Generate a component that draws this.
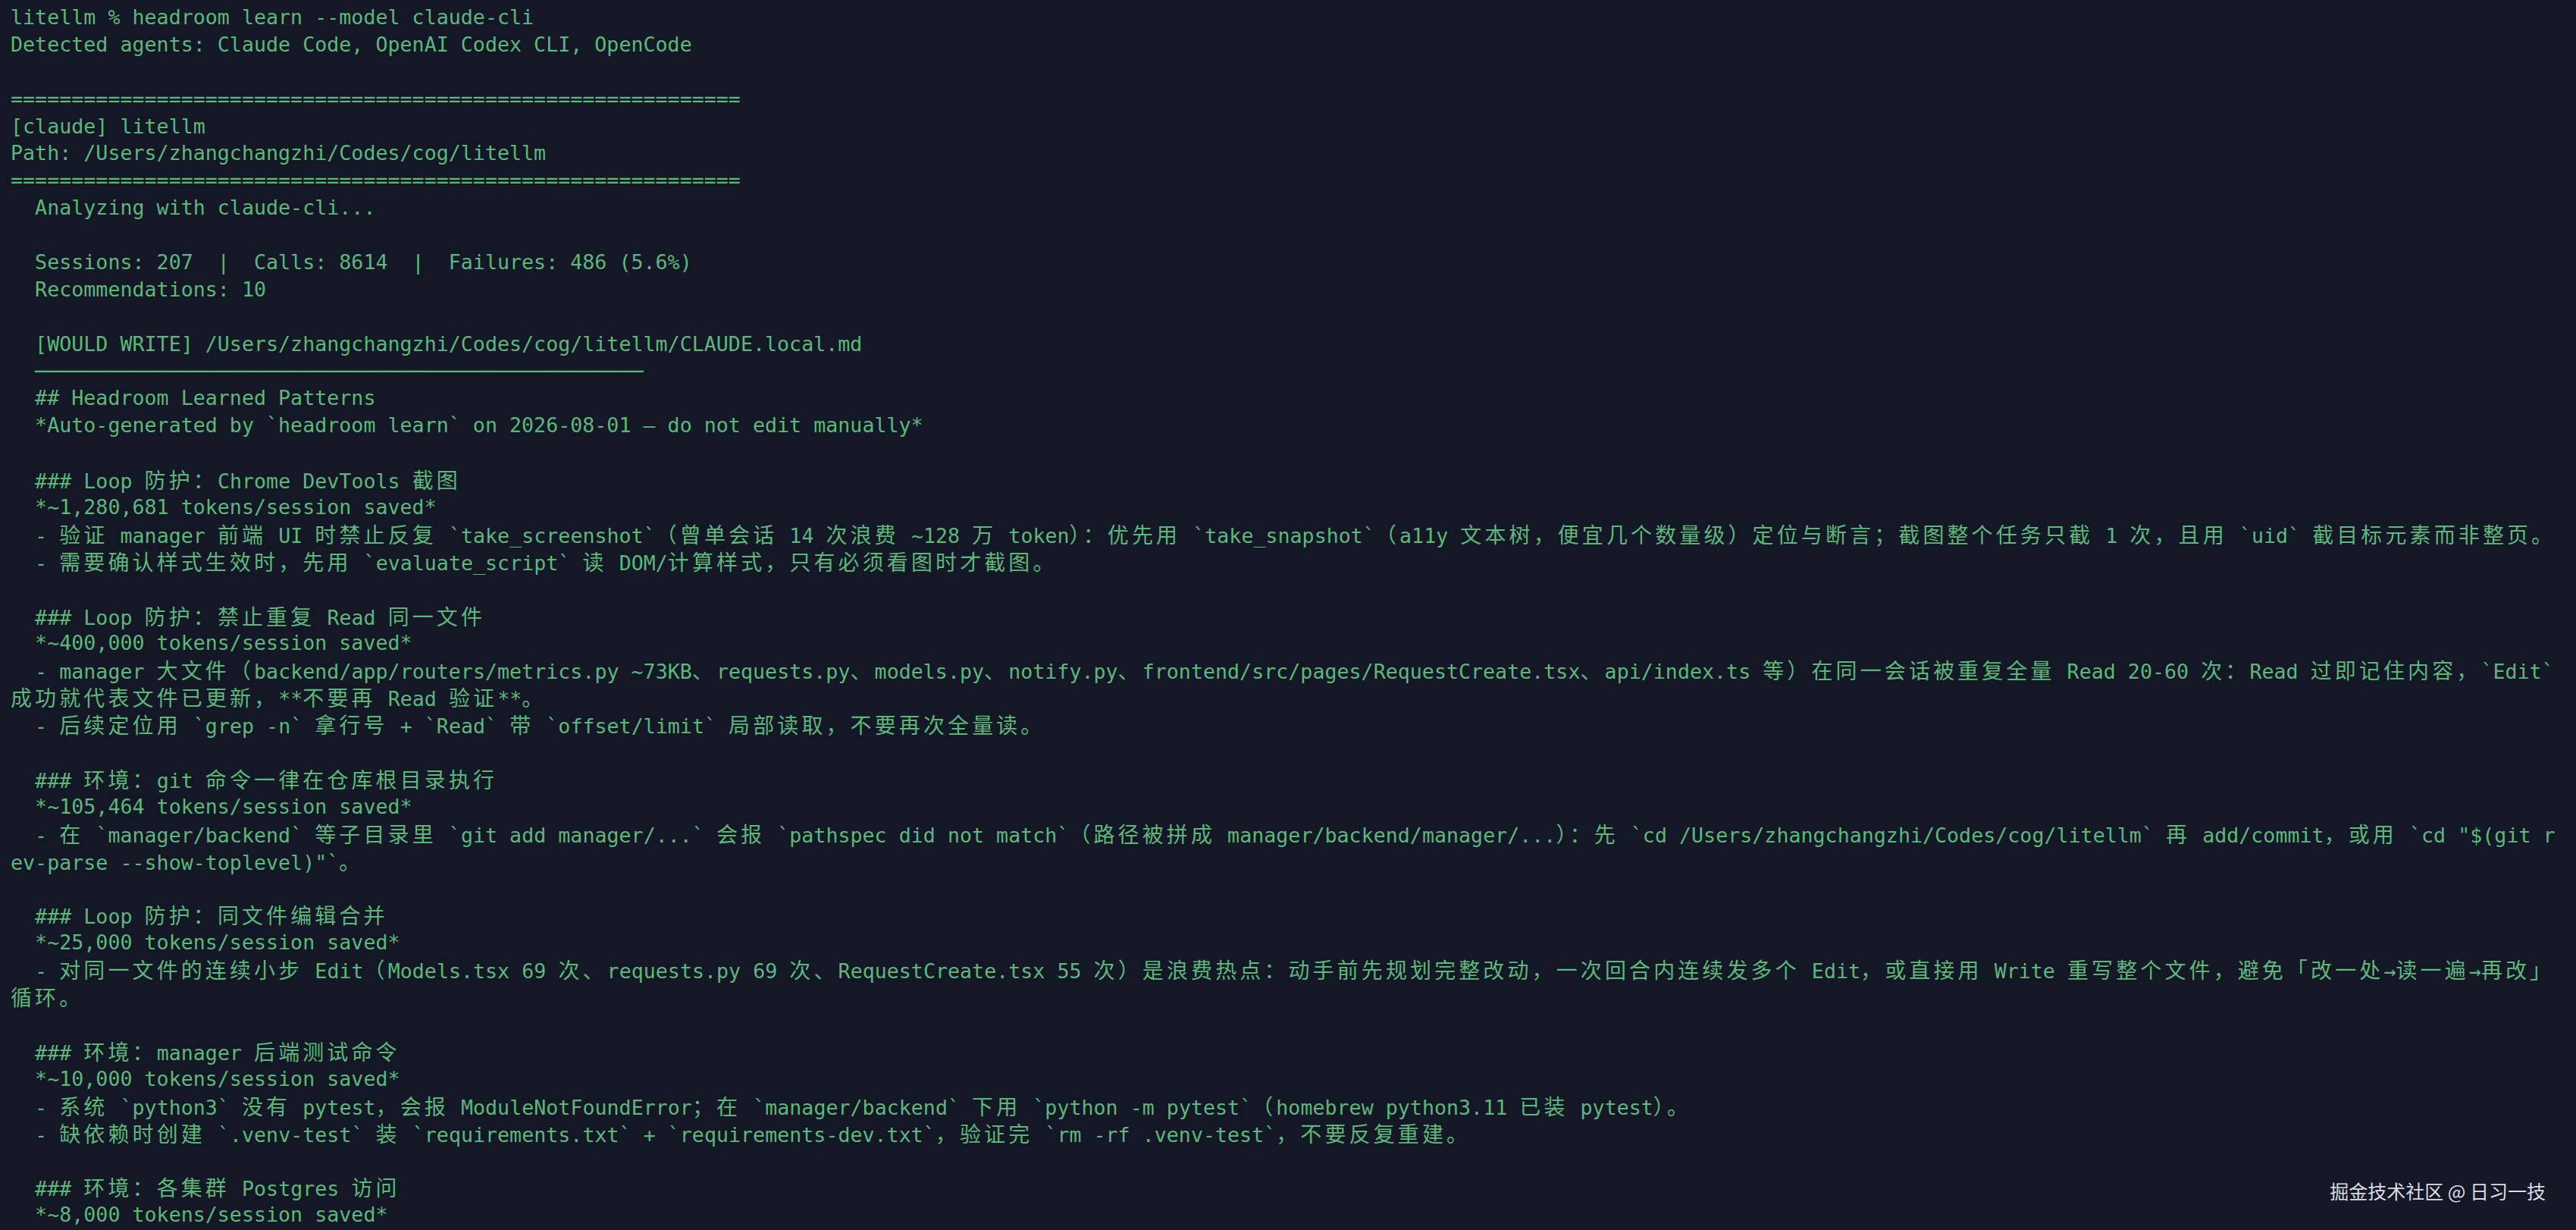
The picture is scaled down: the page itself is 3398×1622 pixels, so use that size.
const CJK_RUN = /([\u2e80-\u9fff\uf900-\ufaff\ufe30-\ufe4f\uff00-\uff60\uffe0-\uffe6]+)/;

const lines: string[] = [
  "litellm % headroom learn --model claude-cli",
  "Detected agents: Claude Code, OpenAI Codex CLI, OpenCode",
  "",
  "=".repeat(60),
  "[claude] litellm",
  "Path: /Users/zhangchangzhi/Codes/cog/litellm",
  "=".repeat(60),
  "  Analyzing with claude-cli...",
  "",
  "  Sessions: 207  |  Calls: 8614  |  Failures: 486 (5.6%)",
  "  Recommendations: 10",
  "",
  "  [WOULD WRITE] /Users/zhangchangzhi/Codes/cog/litellm/CLAUDE.local.md",
  "  " + "─".repeat(50),
  "  ## Headroom Learned Patterns",
  "  *Auto-generated by `headroom learn` on 2026-08-01 — do not edit manually*",
  "",
  "  ### Loop 防护：Chrome DevTools 截图",
  "  *~1,280,681 tokens/session saved*",
  "  - 验证 manager 前端 UI 时禁止反复 `take_screenshot`（曾单会话 14 次浪费 ~128 万 token）：优先用 `take_snapshot`（a11y 文本树，便宜几个数量级）定位与断言；截图整个任务只截 1 次，且用 `uid` 截目标元素而非整页。",
  "  - 需要确认样式生效时，先用 `evaluate_script` 读 DOM/计算样式，只有必须看图时才截图。",
  "",
  "  ### Loop 防护：禁止重复 Read 同一文件",
  "  *~400,000 tokens/session saved*",
  "  - manager 大文件（backend/app/routers/metrics.py ~73KB、requests.py、models.py、notify.py、frontend/src/pages/RequestCreate.tsx、api/index.ts 等）在同一会话被重复全量 Read 20-60 次：Read 过即记住内容，`Edit`",
  "成功就代表文件已更新，**不要再 Read 验证**。",
  "  - 后续定位用 `grep -n` 拿行号 + `Read` 带 `offset/limit` 局部读取，不要再次全量读。",
  "",
  "  ### 环境：git 命令一律在仓库根目录执行",
  "  *~105,464 tokens/session saved*",
  "  - 在 `manager/backend` 等子目录里 `git add manager/...` 会报 `pathspec did not match`（路径被拼成 manager/backend/manager/...）：先 `cd /Users/zhangchangzhi/Codes/cog/litellm` 再 add/commit，或用 `cd \"$(git r",
  "ev-parse --show-toplevel)\"`。",
  "",
  "  ### Loop 防护：同文件编辑合并",
  "  *~25,000 tokens/session saved*",
  "  - 对同一文件的连续小步 Edit（Models.tsx 69 次、requests.py 69 次、RequestCreate.tsx 55 次）是浪费热点：动手前先规划完整改动，一次回合内连续发多个 Edit，或直接用 Write 重写整个文件，避免「改一处→读一遍→再改」",
  "循环。",
  "",
  "  ### 环境：manager 后端测试命令",
  "  *~10,000 tokens/session saved*",
  "  - 系统 `python3` 没有 pytest，会报 ModuleNotFoundError；在 `manager/backend` 下用 `python -m pytest`（homebrew python3.11 已装 pytest）。",
  "  - 缺依赖时创建 `.venv-test` 装 `requirements.txt` + `requirements-dev.txt`，验证完 `rm -rf .venv-test`，不要反复重建。",
  "",
  "  ### 环境：各集群 Postgres 访问",
  "  *~8,000 tokens/session saved*",
];

// terminal cells: CJK glyphs take two columns
const TermLine = ({ text }: { text: string }) => {
  const parts = text.split(CJK_RUN);
  return (
    <div className="h-[35.9px] whitespace-pre">
      {parts.map((p, i) =>
        i % 2 === 1 ? (
          <span
            key={i}
            className="font-['Noto_Sans_CJK_SC',sans-serif] text-[28px] tracking-[4.11px]"
          >
            {p}
          </span>
        ) : (
          p
        )
      )}
    </div>
  );
};

export default function App() {
  return (
    <div className="relative h-screen w-full overflow-hidden bg-[#141726]">
      <div className="pl-[14px] pt-[5px] font-['DejaVu_Sans_Mono','Noto_Sans_CJK_SC',monospace] text-[26.67px] leading-[35.9px] text-[#5cb87a]">
        {lines.map((l, i) => (
          <TermLine key={i} text={l} />
        ))}
      </div>

      <div className="absolute right-[40px] top-[1554px] font-['Noto_Sans_CJK_SC',sans-serif] text-[25px] leading-[32px] text-[#dcdce2]">
        掘金技术社区 @ 日习一技
      </div>
    </div>
  );
}
